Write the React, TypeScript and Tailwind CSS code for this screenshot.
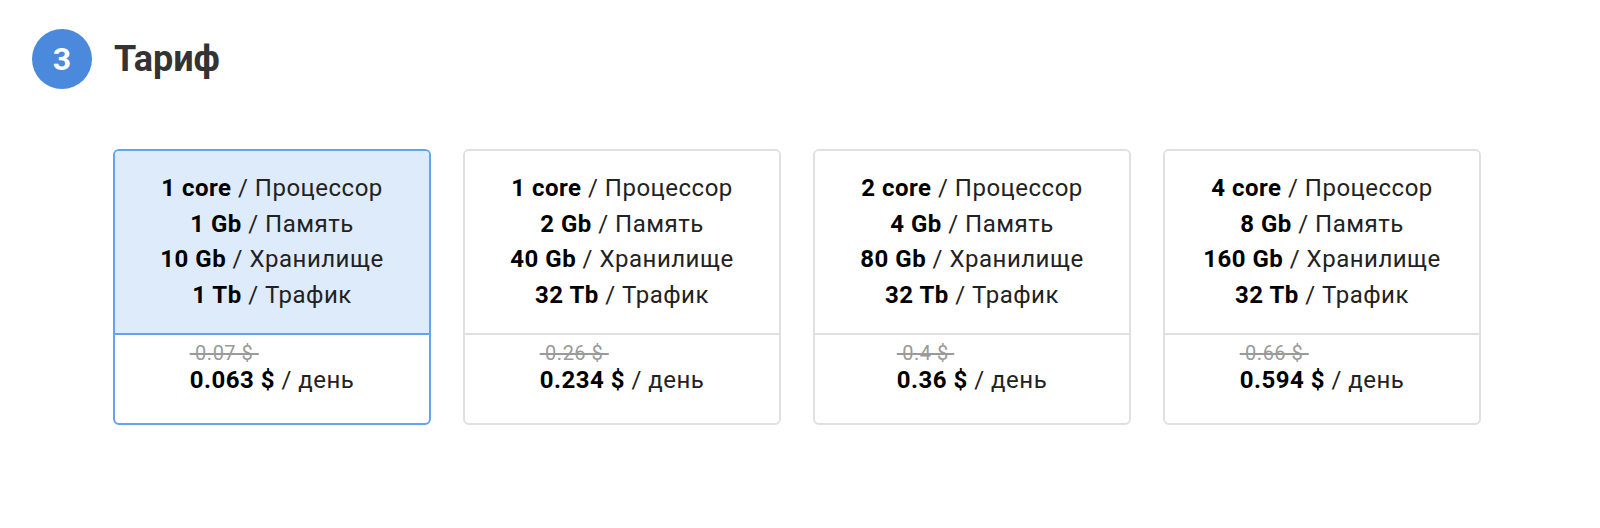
import React from 'react';

const plans = [
  { cpu: '1 core', ram: '1 Gb', disk: '10 Gb', traffic: '1 Tb', oldPrice: '0.07 $', price: '0.063 $' },
  { cpu: '1 core', ram: '2 Gb', disk: '40 Gb', traffic: '32 Tb', oldPrice: '0.26 $', price: '0.234 $' },
  { cpu: '2 core', ram: '4 Gb', disk: '80 Gb', traffic: '32 Tb', oldPrice: '0.4 $', price: '0.36 $' },
  { cpu: '4 core', ram: '8 Gb', disk: '160 Gb', traffic: '32 Tb', oldPrice: '0.66 $', price: '0.594 $' },
];

const App: React.FC = () => {
  const selected = 0;

  return (
    <div className="w-[1600px] h-[528px] bg-white pt-[29px] font-['Roboto',sans-serif]">
      <div className="flex items-center pl-[32px] gap-[22px]">
        <div className="w-[60px] h-[60px] rounded-full bg-[#4a89dc] flex items-center justify-center text-white text-[32px] font-bold">
          3
        </div>
        <h2 className="text-[36px] font-bold text-[#333]">Тариф</h2>
      </div>

      <div className="flex gap-[32px] pl-[113px] mt-[60px]">
        {plans.map((plan, index) => {
          const active = index === selected;
          return (
            <div
              key={index}
              className={`w-[318px] rounded-md border-2 overflow-hidden ${active ? 'border-[#64a3ee]' : 'border-[#e0e0e0]'}`}
            >
              <div
                className={`py-5 text-center text-[24px] tracking-[0.5px] leading-[35.5px] text-[#222] border-b-2 ${active ? 'bg-[#deebfb] border-[#64a3ee]' : 'bg-white border-[#e0e0e0]'}`}
              >
                <div><b className="text-black">{plan.cpu}</b> / Процессор</div>
                <div><b className="text-black">{plan.ram}</b> / Память</div>
                <div><b className="text-black">{plan.disk}</b> / Хранилище</div>
                <div><b className="text-black">{plan.traffic}</b> / Трафик</div>
              </div>
              <div className="h-[88px] pt-[8px] flex justify-center">
                <div className="text-left tracking-[0.5px]">
                  <div className="text-[20px] leading-[20px] text-[#9a9a9a] line-through whitespace-pre">
                    {'\u00a0' + plan.oldPrice + '\u00a0'}
                  </div>
                  <div className="text-[24px] leading-[34px] text-[#222]">
                    <b className="text-black">{plan.price}</b> / день
                  </div>
                </div>
              </div>
            </div>
          );
        })}
      </div>
    </div>
  );
};

export default App;
